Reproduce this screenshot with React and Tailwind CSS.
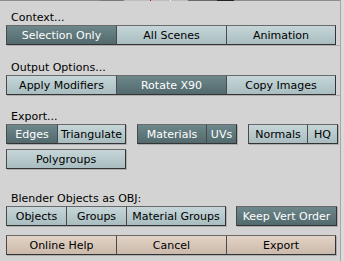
import React from "react";

const base =
  "flex items-center justify-center h-[20px] leading-[20px] border-t border-b border-l border-t-[#6a6a6a] border-b-[#333333] border-l-[#4a4a4a] whitespace-nowrap overflow-visible";

const styles = {
  sel: "bg-gradient-to-b from-[#6e878a] to-[#526a6d] text-white",
  un: "bg-gradient-to-b from-[#c6d6d8] to-[#a9bdc0] text-black",
  tan: "bg-gradient-to-b from-[#e2d3c6] to-[#cbbaab] text-black",
};

function Group({ items, className = "" }) {
  return (
    <div className={"flex shadow-[1px_1px_0_rgba(0,0,0,0.18)] " + className}>
      {items.map((it, i) => (
        <div
          key={it.t}
          className={
            base +
            " " +
            styles[it.s] +
            " " +
            it.w +
            (i === items.length - 1 ? " border-r border-r-[#333333]" : "")
          }
        >
          <span className="pt-[1px]">{it.t}</span>
        </div>
      ))}
    </div>
  );
}

function Label({ h, children }) {
  return (
    <div className={"flex items-end pl-[5px] " + h}>
      <span className="leading-[11px] pb-[2px]">{children}</span>
    </div>
  );
}

export default function App() {
  return (
    <div
      className="w-[344px] h-[261px] bg-[#d3d3d3] text-[11px] text-black flex overflow-hidden"
      style={{ fontFamily: '"DejaVu Sans", sans-serif' }}
    >
      <div className="w-[340px] flex flex-col">
        <div className="flex h-[1px]">
          <div className="w-[100px] bg-[#8c8c8c]" />
          <div className="w-[24px] bg-[#7a7a7a]" />
          <div className="w-[26px] bg-[#bdbdbd]" />
          <div className="w-[1px] bg-[#ff0000]" />
          <div className="w-[19px] bg-[#bdbdbd]" />
          <div className="w-[1px] bg-white" />
          <div className="w-[17px] bg-[#bdbdbd]" />
          <div className="w-[29px] bg-[#6a6a6a]" />
          <div className="w-[17px] bg-[#222222]" />
          <div className="flex-1 bg-[#8c8c8c]" />
        </div>
        <div className="flex flex-col pl-[6px]">
          <Label h="h-[24px]">Context...</Label>
          <Group
            items={[
              { t: "Selection Only", s: "sel", w: "w-[110px]" },
              { t: "All Scenes", s: "un", w: "w-[110px]" },
              { t: "Animation", s: "un", w: "w-[110px]" },
            ]}
          />
          <Label h="h-[30px]">Output Options...</Label>
          <Group
            items={[
              { t: "Apply Modifiers", s: "un", w: "w-[110px]" },
              { t: "Rotate X90", s: "sel", w: "w-[110px]" },
              { t: "Copy Images", s: "un", w: "w-[110px]" },
            ]}
          />
          <Label h="h-[29px]">Export...</Label>
          <div className="flex gap-[11px]">
            <Group
              items={[
                { t: "Edges", s: "sel", w: "w-[51px]" },
                { t: "Triangulate", s: "un", w: "w-[69px]" },
              ]}
            />
            <Group
              items={[
                { t: "Materials", s: "sel", w: "w-[69px]" },
                { t: "UVs", s: "sel", w: "w-[31px]" },
              ]}
            />
            <Group
              items={[
                { t: "Normals", s: "un", w: "w-[59px]" },
                { t: "HQ", s: "un", w: "w-[31px]" },
              ]}
            />
          </div>
          <div className="h-[5px]" />
          <Group
            className="self-start"
            items={[{ t: "Polygroups", s: "un", w: "w-[120px]" }]}
          />
          <Label h="h-[37px]">Blender Objects as OBJ:</Label>
          <div className="flex gap-[10px]">
            <Group
              items={[
                { t: "Objects", s: "un", w: "w-[60px]" },
                { t: "Groups", s: "un", w: "w-[60px]" },
                { t: "Material Groups", s: "un", w: "w-[100px]" },
              ]}
            />
            <Group
              items={[{ t: "Keep Vert Order", s: "sel", w: "w-[101px]" }]}
            />
          </div>
          <div className="h-[9px]" />
          <Group
            className="self-start"
            items={[
              { t: "Online Help", s: "tan", w: "w-[110px]" },
              { t: "Cancel", s: "tan", w: "w-[110px]" },
              { t: "Export", s: "tan", w: "w-[110px]" },
            ]}
          />
        </div>
      </div>
      <div className="w-[1px] bg-[#a6a6a6]" />
      <div className="flex-1 bg-[#dadada]" />
    </div>
  );
}
